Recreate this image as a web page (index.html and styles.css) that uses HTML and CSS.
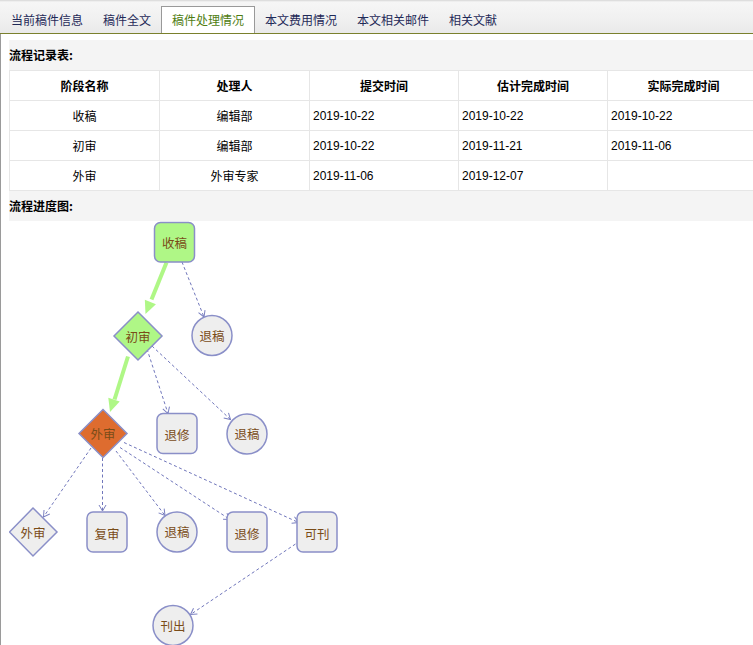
FILE: index.html
```html
<!DOCTYPE html>
<html lang="zh">
<head>
<meta charset="utf-8">
<title>稿件处理情况</title>
<link rel="stylesheet" href="styles.css">
</head>
<body>
<div class="tabs">
  <a class="tab">当前稿件信息</a>
  <a class="tab">稿件全文</a>
  <a class="tab active">稿件处理情况</a>
  <a class="tab">本文费用情况</a>
  <a class="tab">本文相关邮件</a>
  <a class="tab">相关文献</a>
</div>
<div class="content">
  <div class="panel">
    <div class="sec-title">流程记录表:</div>
    <table class="grid">
      <colgroup>
        <col class="c1"><col class="c2"><col class="c3"><col class="c4"><col class="c5">
      </colgroup>
      <thead>
        <tr><th>阶段名称</th><th>处理人</th><th>提交时间</th><th>估计完成时间</th><th>实际完成时间</th></tr>
      </thead>
      <tbody>
        <tr><td class="ctr">收稿</td><td class="ctr">编辑部</td><td>2019-10-22</td><td>2019-10-22</td><td>2019-10-22</td></tr>
        <tr><td class="ctr">初审</td><td class="ctr">编辑部</td><td>2019-10-22</td><td>2019-11-21</td><td>2019-11-06</td></tr>
        <tr><td class="ctr">外审</td><td class="ctr">外审专家</td><td>2019-11-06</td><td>2019-12-07</td><td></td></tr>
      </tbody>
    </table>
    <div class="sec-title">流程进度图:</div>
  </div>
  <div class="chart">
    <svg class="flow" width="744" height="425" viewBox="9 220 744 425" xmlns="http://www.w3.org/2000/svg">
      <defs>
        <marker id="oa" markerUnits="userSpaceOnUse" markerWidth="10" markerHeight="10" refX="7" refY="4" orient="auto">
          <path d="M1,0.5 L7,4 L1,7.5" fill="none" stroke="#7b80c0" stroke-width="1"/>
        </marker>
      </defs>
      <!-- green progress edges -->
      <line x1="166.5" y1="261.5" x2="151.5" y2="298.5" class="gline"/>
      <polygon points="145.5,313 155.96,303.27 144.85,298.73" class="ghead"/>
      <line x1="128" y1="355.5" x2="114.5" y2="398.5" class="gline"/>
      <polygon points="110,411 119.72,400.49 108.3,396.79" class="ghead"/>
      <!-- dashed edges -->
      <line x1="182" y1="261" x2="204" y2="316" class="dline"/>
      <line x1="147" y1="348" x2="168" y2="412.5" class="dline"/>
      <line x1="152" y1="345" x2="230.5" y2="418.5" class="dline"/>
      <line x1="91" y1="447" x2="43.5" y2="516" class="dline"/>
      <line x1="102.5" y1="457" x2="102.5" y2="510" class="dline"/>
      <line x1="116" y1="450" x2="165" y2="514.5" class="dline"/>
      <line x1="120" y1="446.5" x2="230" y2="518.5" class="dline"/>
      <line x1="124" y1="441.5" x2="298.5" y2="521.5" class="dline"/>
      <line x1="300" y1="540" x2="190.5" y2="613.5" class="dline"/>
      <!-- nodes -->
      <rect x="154.5" y="221.5" width="40" height="39.5" rx="6" class="node done"/>
      <text x="174.5" y="241.5" class="lbl">收稿</text>

      <polygon points="138,311 162,335 138,359 114,335" class="node done"/>
      <text x="138" y="335" class="lbl">初审</text>

      <circle cx="212" cy="334.5" r="20" class="node"/>
      <text x="212" y="334.5" class="lbl">退稿</text>

      <polygon points="103,408.5 127,432.5 103,456.5 79,432.5" class="node cur"/>
      <text x="103" y="432.5" class="lbl">外审</text>

      <rect x="157" y="412.5" width="40" height="40" rx="6" class="node"/>
      <text x="177" y="433" class="lbl">退修</text>

      <circle cx="247" cy="433" r="20" class="node"/>
      <text x="247" y="432" class="lbl">退稿</text>

      <polygon points="33,507 57,531 33,555 9.5,531" class="node"/>
      <text x="33" y="531" class="lbl">外审</text>

      <rect x="87" y="511" width="40" height="40" rx="6" class="node"/>
      <text x="107" y="532" class="lbl">复审</text>

      <circle cx="177" cy="531" r="20" class="node"/>
      <text x="177" y="530" class="lbl">退稿</text>

      <rect x="227" y="511" width="40" height="40" rx="6" class="node"/>
      <text x="247" y="532" class="lbl">退修</text>

      <rect x="297" y="511" width="40" height="40" rx="6" class="node"/>
      <text x="317" y="532" class="lbl">可刊</text>

      <circle cx="173" cy="624.5" r="20" class="node"/>
      <text x="173" y="624" class="lbl">刊出</text>
    </svg>
  </div>
</div>
</body>
</html>
```

FILE: styles.css
```css
html, body {
  margin: 0;
  padding: 0;
}
body {
  width: 753px;
  height: 645px;
  overflow: hidden;
  background: #ffffff;
  font-family: "Liberation Sans", "Noto Sans CJK SC", sans-serif;
  font-size: 12px;
  color: #000;
}
.tabs {
  display: flex;
  align-items: flex-end;
  height: 33px;
  padding-left: 1px;
  background: linear-gradient(#d6d6d6 0, #f6f6f6 2px, #f0f0f0 60%, #e9e9e9 100%);
  border-bottom: 1px solid #7a802c;
  box-sizing: content-box;
}
.tab {
  display: block;
  height: 26px;
  line-height: 26px;
  padding: 0 10px;
  font-family: "Noto Sans CJK SC", sans-serif;
  font-size: 12px;
  color: #1f2a58;
  white-space: nowrap;
  cursor: pointer;
}
.tab.active {
  background: #ffffff;
  border: 1px solid #999999;
  border-bottom: none;
  color: #4f7d12;
}
.content {
  border-left: 1px solid #9a9a9a;
  padding: 6px 0 0 8px;
  height: 605px;
}
.panel {
  background: #f4f4f4;
}
.sec-title {
  height: 30px;
  line-height: 30px;
  font-family: "Noto Sans CJK SC", sans-serif;
  font-weight: bold;
  font-size: 12px;
  color: #000;
}
.grid {
  border-collapse: collapse;
  table-layout: fixed;
  width: 750px;
  background: #ffffff;
}
.grid .c1 { width: 150px; }
.grid .c2 { width: 150px; }
.grid .c3 { width: 149px; }
.grid .c4 { width: 149px; }
.grid .c5 { width: 152px; }
.grid tr {
  height: 30px;
}
.grid th, .grid td {
  height: 30px;
  padding: 0 3px;
  border: 1px solid #e6e6e6;
  box-sizing: border-box;
  font-size: 12px;
  white-space: nowrap;
  overflow: hidden;
}
.grid th {
  font-family: "Noto Sans CJK SC", sans-serif;
  font-weight: bold;
  text-align: center;
}
.grid td {
  text-align: left;
  font-family: "Liberation Sans", "Noto Sans CJK SC", sans-serif;
}
.grid td.ctr {
  text-align: center;
  font-family: "Noto Sans CJK SC", sans-serif;
}
.chart {
  margin-left: 0;
}
.flow {
  display: block;
}
.node {
  fill: #eeeeee;
  stroke: #8a8fc8;
  stroke-width: 1.5;
}
.node.done {
  fill: #aff786;
}
.node.cur {
  fill: #de6c2f;
}
.lbl {
  font-family: "Noto Sans CJK SC", sans-serif;
  font-size: 12.5px;
  fill: #7a4c18;
  text-anchor: middle;
  dominant-baseline: central;
}
.gline {
  stroke: #aff786;
  stroke-width: 4;
}
.ghead {
  fill: #aff786;
}
.dline {
  stroke: #7076bb;
  stroke-width: 1;
  stroke-dasharray: 3 2.5;
  marker-end: url(#oa);
}
```
